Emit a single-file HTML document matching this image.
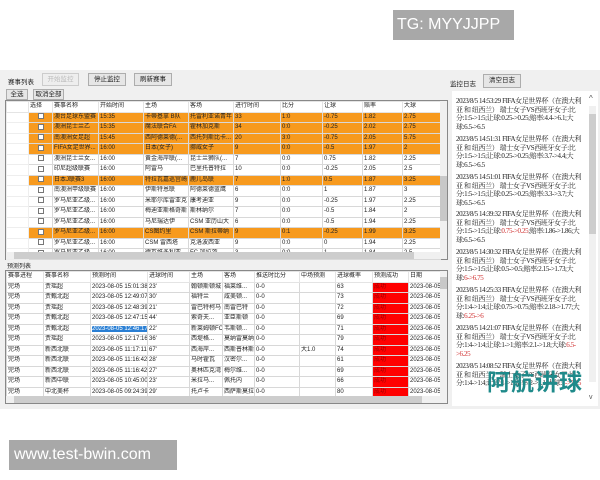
<!DOCTYPE html>
<html><head><meta charset="utf-8"><style>
*{margin:0;padding:0;box-sizing:border-box}
body{width:600px;height:480px;background:#fff;position:relative;overflow:hidden;font-family:"Liberation Sans","Noto Sans CJK SC",sans-serif;font-size:6.5px;color:#222}
.a{position:absolute}
.btn{position:absolute;background:#e6e6e6;border:1px solid #adadad;text-align:center;font-size:6.5px;line-height:11px}
table{border-collapse:collapse;table-layout:fixed;position:absolute;background:#fff}
td{border:1px solid #d8d8d8;height:10.5px;padding:0 1px;white-space:nowrap;overflow:hidden;font-size:6px;line-height:9px}
tr.h td{background:#fff;border-color:#e4e4e4}
tr.o td{background:#f79a1e}
tr.o td.rh{background:#fff}
td.rh{border-color:#eee}
.cb{display:inline-block;width:6px;height:6px;border:1px solid #777;background:#fff;vertical-align:middle}
.red{background:#f00!important;color:#900}
.log{font-family:"Liberation Serif","Noto Serif CJK SC",serif;font-size:7px;letter-spacing:-0.4px;line-height:8.6px;color:#222;position:absolute;left:456px;width:128px}
.r{color:#d03030}
</style></head><body>
<div class="a" style="left:393px;top:10px;width:121px;height:30px;background:#a8a8a8;color:#fff;font-size:16px;line-height:30px;padding-left:4px">TG: MYYJJPP</div>

<div class="a" style="left:0;top:70px;width:600px;height:339px;background:#f0f0f0"></div>
<div class="a" style="left:8px;top:76px;font-size:6.5px">赛事列表</div>
<div class="btn" style="left:42px;top:73px;width:37px;height:13px;color:#bbb;border-color:#ccc;background:#eee">开始监控</div>
<div class="btn" style="left:88px;top:73px;width:38px;height:13px">停止监控</div>
<div class="btn" style="left:134px;top:73px;width:38px;height:13px">刷新赛事</div>
<div class="btn" style="left:6px;top:89px;width:22px;height:11px;line-height:9px">全选</div>
<div class="btn" style="left:33px;top:89px;width:31px;height:11px;line-height:9px">取消全部</div>
<div class="a" style="left:450px;top:78px">监控日志</div>
<div class="btn" style="left:483px;top:74px;width:38px;height:14px">清空日志</div>

<div class="a" style="left:5px;top:100px;width:443px;height:160px;border:1px solid #888;background:#fff"></div>
<table style="left:6px;top:101px;width:434px">
<colgroup><col style="width:22px"><col style="width:24px"><col style="width:46px"><col style="width:45px"><col style="width:45px"><col style="width:45px"><col style="width:47px"><col style="width:42px"><col style="width:40px"><col style="width:40px"><col style="width:38px"></colgroup>
<tr class="h"><td class="rh"></td><td>选择</td><td>赛事名称</td><td>开始时间</td><td>主场</td><td>客场</td><td>进行时间</td><td>比分</td><td>让球</td><td>赔率</td><td>大球</td></tr>
<tr class="o"><td class="rh"></td><td style="text-align:center"><span class="cb"></span></td><td>澳台足球东盟赛</td><td>15:35</td><td>卡蒂基拿 B队</td><td>托雷利亚诺青年</td><td>33</td><td>1:0</td><td>-0.75</td><td>1.82</td><td>2.75</td></tr>
<tr class="o"><td class="rh"></td><td style="text-align:center"><span class="cb"></span></td><td>澳洲昆士兰乙</td><td>15:35</td><td>魔法联合FA</td><td>霍林加克斯</td><td>34</td><td>0:0</td><td>-0.25</td><td>2.02</td><td>2.75</td></tr>
<tr class="o"><td class="rh"></td><td style="text-align:center"><span class="cb"></span></td><td>南澳洲女足超</td><td>15:45</td><td>西阿德莱德(...</td><td>西托列斯比卡...</td><td>20</td><td>3:0</td><td>-0.75</td><td>2.05</td><td>5.75</td></tr>
<tr class="o"><td class="rh"></td><td style="text-align:center"><span class="cb"></span></td><td>FIFA女足世界...</td><td>16:00</td><td>日本(女子)</td><td>挪威女子</td><td>9</td><td>0:0</td><td>-0.5</td><td>1.97</td><td>2</td></tr>
<tr><td class="rh"></td><td style="text-align:center"><span class="cb"></span></td><td>澳洲昆士兰女...</td><td>16:00</td><td>黄金海岸联(...</td><td>昆士兰狮队(...</td><td>7</td><td>0:0</td><td>0.75</td><td>1.82</td><td>2.25</td></tr>
<tr><td class="rh"></td><td style="text-align:center"><span class="cb"></span></td><td>印尼超级联赛</td><td>16:00</td><td>阿雷马</td><td>巴里托普特拉</td><td>10</td><td>0:0</td><td>-0.25</td><td>2.05</td><td>2.5</td></tr>
<tr class="o"><td class="rh"></td><td style="text-align:center"><span class="cb"></span></td><td>日本J联赛3</td><td>16:00</td><td>特拉瓦嘉巡宫崎</td><td>鹿儿岛联</td><td>7</td><td>1:0</td><td>0.5</td><td>1.87</td><td>3.25</td></tr>
<tr><td class="rh"></td><td style="text-align:center"><span class="cb"></span></td><td>南澳洲甲级联赛</td><td>16:00</td><td>伊斯特恩联</td><td>阿德莱德蓝鹰</td><td>6</td><td>0:0</td><td>1</td><td>1.87</td><td>3</td></tr>
<tr><td class="rh"></td><td style="text-align:center"><span class="cb"></span></td><td>罗马尼亚乙级...</td><td>16:00</td><td>米耶尔库雷亚克</td><td>康考迪亚</td><td>9</td><td>0:0</td><td>-0.25</td><td>1.97</td><td>2.25</td></tr>
<tr><td class="rh"></td><td style="text-align:center"><span class="cb"></span></td><td>罗马尼亚乙级...</td><td>16:00</td><td>梅迪亚斯格奇斯</td><td>斯林纳尔</td><td>7</td><td>0:0</td><td>-0.5</td><td>1.84</td><td>2</td></tr>
<tr><td class="rh"></td><td style="text-align:center"><span class="cb"></span></td><td>罗马尼亚乙级...</td><td>16:00</td><td>马尼瑞达伊</td><td>CSM 亚历山大</td><td>6</td><td>0:0</td><td>-0.5</td><td>1.94</td><td>2.25</td></tr>
<tr class="o"><td class="rh"></td><td style="text-align:center"><span class="cb"></span></td><td>罗马尼亚乙级...</td><td>16:00</td><td>CS图约里</td><td>CSM 斯拉蒂纳</td><td>9</td><td>0:1</td><td>-0.25</td><td>1.99</td><td>3.25</td></tr>
<tr><td class="rh"></td><td style="text-align:center"><span class="cb"></span></td><td>罗马尼亚乙级...</td><td>16:00</td><td>CSM 雷西塔</td><td>克洛波西亚</td><td>9</td><td>0:0</td><td>0</td><td>1.94</td><td>2.25</td></tr>
<tr><td class="rh"></td><td style="text-align:center"><span class="cb"></span></td><td>罗马尼亚乙级...</td><td>16:00</td><td>德瓦维多利亚</td><td>FC 加拉茨</td><td>3</td><td>0:0</td><td>1</td><td>1.84</td><td>2.5</td></tr>
</table>
<div class="a" style="left:440px;top:101px;width:7px;height:151px;background:#f0f0f0"><div style="margin-top:75px;height:45px;background:#c8c8c8"></div></div>
<div class="a" style="left:6px;top:252px;width:441px;height:7px;background:#f0f0f0"><div style="margin-left:8px;width:400px;height:7px;background:#cdcdcd"></div></div>

<div class="a" style="left:7px;top:261px;font-size:6px">预测列表</div>
<div class="a" style="left:5px;top:270px;width:443px;height:134px;border:1px solid #888;background:#fff"></div>
<table style="left:6px;top:271px;width:434px">
<colgroup><col style="width:37px"><col style="width:47px"><col style="width:57px"><col style="width:42px"><col style="width:33px"><col style="width:32px"><col style="width:45px"><col style="width:36px"><col style="width:37px"><col style="width:36px"><col style="width:32px"></colgroup>
<tr class="h"><td>赛事进程</td><td>赛事名称</td><td>预测时间</td><td>进球时间</td><td>主场</td><td>客场</td><td>推送时比分</td><td>中场预测</td><td>进球概率</td><td>预测成功</td><td>日期</td></tr>
<tr><td>完场</td><td>贾瑶超</td><td>2023-08-05 15:01:38</td><td>23'</td><td>翰顿斯顿城</td><td>福莱维...</td><td>0-0</td><td></td><td>63</td><td class="red">成功</td><td>2023-08-05</td></tr>
<tr><td>完场</td><td>贾甄北超</td><td>2023-08-05 12:49:07</td><td>30'</td><td>福特兰</td><td>咸美顿...</td><td>0-0</td><td></td><td>73</td><td class="red">成功</td><td>2023-08-05</td></tr>
<tr><td>完场</td><td>贾瑶超</td><td>2023-08-05 12:48:39</td><td>21'</td><td>雷巴特柯马</td><td>南雷巴特</td><td>0-0</td><td></td><td>72</td><td class="red">成功</td><td>2023-08-05</td></tr>
<tr><td>完场</td><td>贾甄北超</td><td>2023-08-05 12:47:15</td><td>44'</td><td>索奇夫...</td><td>亚臣斯顿</td><td>0-0</td><td></td><td>69</td><td class="red">成功</td><td>2023-08-05</td></tr>
<tr><td>完场</td><td>贾甄北超</td><td><span style="background:#2a7fd4;color:#fff">2023-08-05 12:46:17</span></td><td>22'</td><td>新莱姆顿FC</td><td>韦斯顿...</td><td>0-0</td><td></td><td>71</td><td class="red">成功</td><td>2023-08-05</td></tr>
<tr><td>完场</td><td>贾瑶超</td><td>2023-08-05 12:17:16</td><td>36'</td><td>西堤格...</td><td>莫纳雷莫纳</td><td>0-0</td><td></td><td>79</td><td class="red">成功</td><td>2023-08-05</td></tr>
<tr><td>完场</td><td>新西北联</td><td>2023-08-05 11:17:11</td><td>67'</td><td>西海岸...</td><td>西斯普林斯</td><td>0-0</td><td>大1.0</td><td>74</td><td class="red">成功</td><td>2023-08-05</td></tr>
<tr><td>完场</td><td>新西北联</td><td>2023-08-05 11:16:42</td><td>28'</td><td>马时霍瓦</td><td>汉密尔...</td><td>0-0</td><td></td><td>61</td><td class="red">成功</td><td>2023-08-05</td></tr>
<tr><td>完场</td><td>新西北联</td><td>2023-08-05 11:16:42</td><td>27'</td><td>奥林匹克湾</td><td>梅尔维...</td><td>0-0</td><td></td><td>69</td><td class="red">成功</td><td>2023-08-05</td></tr>
<tr><td>完场</td><td>新西中联</td><td>2023-08-05 10:45:00</td><td>23'</td><td>米拉马...</td><td>佩托内</td><td>0-0</td><td></td><td>66</td><td class="red">成功</td><td>2023-08-05</td></tr>
<tr><td>完场</td><td>中北美杯</td><td>2023-08-05 09:24:39</td><td>29'</td><td>托卢卡</td><td>西萨斯莫拉</td><td>0-0</td><td></td><td>80</td><td class="red">成功</td><td>2023-08-05</td></tr>
</table>
<div class="a" style="left:440px;top:271px;width:7px;height:125px;background:#f0f0f0"><div style="margin-top:6px;height:12px;background:#c8c8c8"></div></div>
<div class="a" style="left:6px;top:396px;width:441px;height:7px;background:#f0f0f0"><div style="margin-left:8px;width:408px;height:7px;background:#cdcdcd"></div></div>

<div class="a" style="left:452px;top:91px;width:146px;height:315px;background:#fff"></div>
<div class="a" style="left:589px;top:106px;width:7px;height:276px;background:#f0f0f0"><div style="margin-top:8px;height:120px;background:#cdcdcd"></div></div>
<div class="a" style="left:589px;top:94px;font-size:8px;color:#555">^</div>
<div class="a" style="left:589px;top:394px;font-size:7px;color:#555">v</div>
<div class="log" style="top:97px">2023/8/5 14:53:29 FIFA女足世界杯（在澳大利亚 和 纽西兰） 瑞士女子VS西班牙女子:比分:1:5->1:5;让球:0.25->0.25;赔率:4.4->6.1;大球:6.5->6.5</div>
<div class="log" style="top:135px">2023/8/5 14:51:31 FIFA女足世界杯（在澳大利亚 和 纽西兰） 瑞士女子VS西班牙女子:比分:1:5->1:5;让球:0.25->0.25;赔率:3.7->4.4;大球:6.5->6.5</div>
<div class="log" style="top:173px">2023/8/5 14:51:01 FIFA女足世界杯（在澳大利亚 和 纽西兰） 瑞士女子VS西班牙女子:比分:1:5->1:5;让球:0.25->0.25;赔率:3.3->3.7;大球:6.5->6.5</div>
<div class="log" style="top:210px">2023/8/5 14:39:32 FIFA女足世界杯（在澳大利亚 和 纽西兰） 瑞士女子VS西班牙女子:比分:1:5->1:5;让球:<span class="r">0.75->0.25</span>;赔率:1.86->1.86;大球:6.5->6.5</div>
<div class="log" style="top:248px">2023/8/5 14:30:32 FIFA女足世界杯（在澳大利亚 和 纽西兰） 瑞士女子VS西班牙女子:比分:1:5->1:5;让球:0.5->0.5;赔率:2.15->1.73;大球:<span class="r">6->6.75</span></div>
<div class="log" style="top:286px">2023/8/5 14:25:33 FIFA女足世界杯（在澳大利亚 和 纽西兰） 瑞士女子VS西班牙女子:比分:1:4->1:4;让球:0.75->0.75;赔率:2.18->1.77;大球:<span class="r">6.25->6</span></div>
<div class="log" style="top:324px">2023/8/5 14:21:07 FIFA女足世界杯（在澳大利亚 和 纽西兰） 瑞士女子VS西班牙女子:比分:1:4->1:4;让球:1->1;赔率:2.1->1.8;大球:<span class="r">6.5->6.25</span></div>
<div class="log" style="top:362px">2023/8/5 14:08:52 FIFA女足世界杯（在澳大利亚 和 纽西兰） 瑞士女子VS西班牙女子:比分:1:4->1:4;让球:1->1;赔率:2->2.1;大球:<span class="r">7->7.25</span></div>
<div class="a" style="left:487px;top:366px;font-size:23px;font-weight:bold;color:#1f8a8a;font-family:'Noto Sans CJK SC',sans-serif;line-height:28px;letter-spacing:1px">阿航讲球</div>

<div class="a" style="left:9px;top:440px;width:168px;height:30px;background:#a8a8a8;color:#fff;font-size:16px;line-height:30px;padding-left:5px">www.test-bwin.com</div>
</body></html>
